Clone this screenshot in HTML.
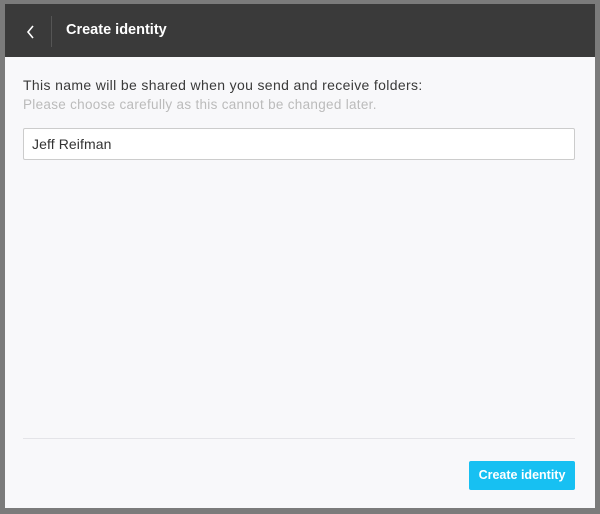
<!DOCTYPE html>
<html><head><meta charset="utf-8"><style>
html,body{margin:0;padding:0;}
body{width:600px;height:514px;background:#7b7b7b;position:relative;overflow:hidden;font-family:"Liberation Sans",sans-serif;}
.win{position:absolute;left:5px;top:4px;width:590px;height:504px;background:#f8f8fa;}
.hdr{position:absolute;left:0;top:0;width:590px;height:53px;background:#3a3a3a;}
.div{position:absolute;left:46px;top:12px;width:1px;height:31px;background:#555;}
.title{position:absolute;left:61px;top:18px;color:#fff;font-size:14.5px;font-weight:bold;}
.t1{position:absolute;left:18px;top:73px;font-size:14px;color:#3a3a3a;letter-spacing:0.35px;}
.t2{position:absolute;left:18px;top:93px;font-size:13.5px;color:#bbb;letter-spacing:0.3px;}
.inp{position:absolute;left:18px;top:124px;width:550px;height:30px;border:1px solid #ccc;border-radius:2px;background:#fff;}
.inp span{position:absolute;left:8px;top:7px;font-size:14px;color:#333;letter-spacing:0.1px;}
.hr{position:absolute;left:18px;top:434px;width:552px;height:1px;background:#e4e4e8;}
.btn{position:absolute;left:464px;top:457px;width:106px;height:29px;background:#17c0f2;border-radius:2px;color:#fff;font-size:12.5px;font-weight:bold;text-align:center;line-height:29px;}
</style></head><body>
<div class="win">
<div class="hdr">
<svg style="position:absolute;left:20px;top:20px" width="12" height="16" viewBox="0 0 12 16"><path d="M8 2 L3 8 L8 14" stroke="#fff" stroke-width="1.6" fill="none"/></svg>
<div class="div"></div>
<div class="title">Create identity</div>
</div>
<div class="t1">This name will be shared when you send and receive folders:</div>
<div class="t2">Please choose carefully as this cannot be changed later.</div>
<div class="inp"><span>Jeff Reifman</span></div>
<div class="hr"></div>
<div class="btn">Create identity</div>
</div>
</body></html>
